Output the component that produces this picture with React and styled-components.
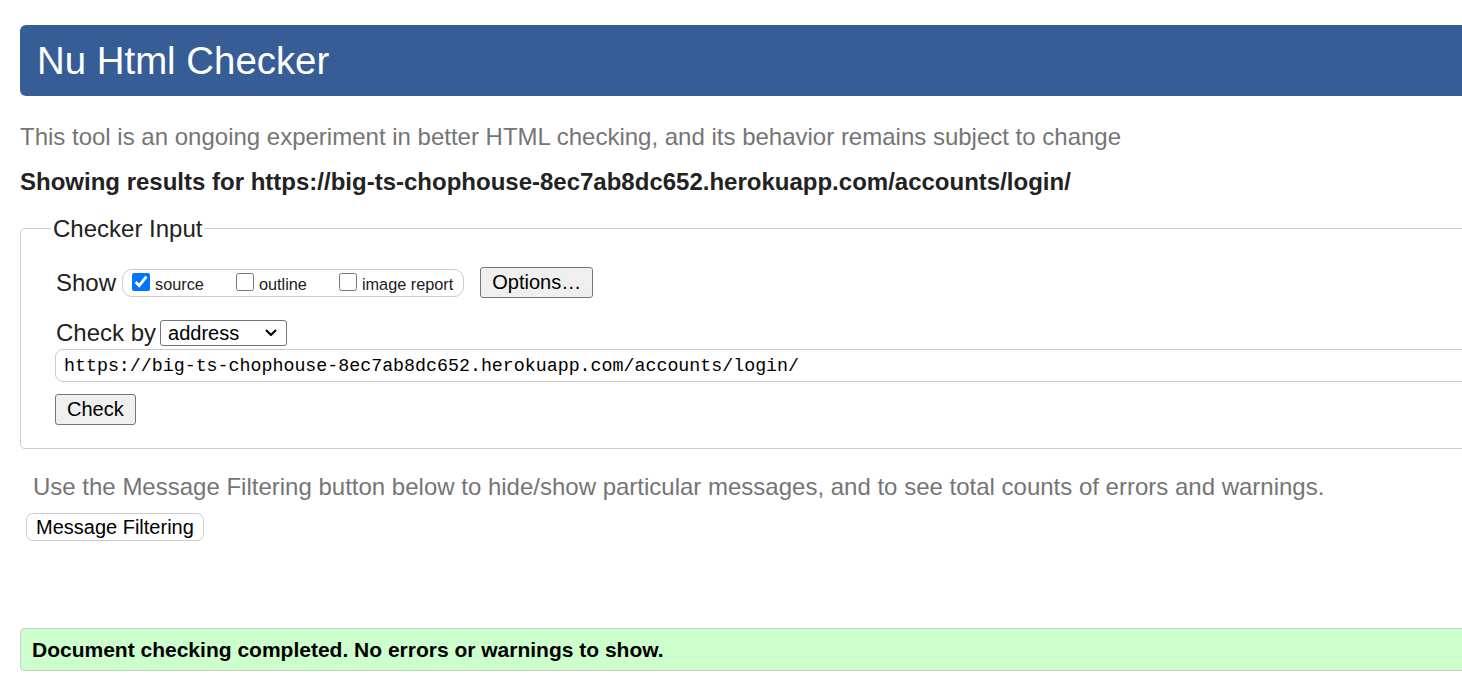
import React from "react";
import styled, { createGlobalStyle } from "styled-components";

const Global = createGlobalStyle`
  html, body { margin: 0; padding: 0; overflow: hidden; background: #fff; }
  body { font-family: "Liberation Sans", Arial, sans-serif; color: #222; }
`;

const Page = styled.div`
  width: 1500px;
  padding: 25px 0 0 20px;
  box-sizing: border-box;
`;

const Header = styled.h1`
  margin: 0;
  height: 71px;
  line-height: 71px;
  background: #365d95;
  color: #fff;
  font-weight: normal;
  font-size: 38.4px;
  padding-left: 17px;
  border-radius: 6px;
`;

const Note = styled.p`
  margin: ${(p) => p.$mt || 0}px 0 0 ${(p) => p.$ml || 0}px;
  font-size: 24px;
  line-height: 28px;
  color: #757575;
`;

const Results = styled.p`
  margin: 17px 0 0;
  font-size: 24px;
  font-weight: bold;
  line-height: 28px;
  color: #222;
`;

const Fieldset = styled.fieldset`
  margin: 19px 0 0;
  padding: 0 0 23px 35px;
  border: 1px solid #ccc;
  border-radius: 5px;
  display: flex;
  flex-direction: column;
  align-items: flex-start;
`;

const Legend = styled.legend`
  font-size: 24px;
  line-height: 27px;
  padding: 0 2px;
  margin-left: -5px;
  color: #222;
`;

const Row = styled.div`
  display: flex;
  align-items: center;
  margin-top: ${(p) => p.$mt || 0}px;
`;

const Label = styled.span`
  font-size: 24px;
  color: #222;
  margin-right: ${(p) => p.$mr || 0}px;
`;

const Choices = styled.div`
  display: flex;
  align-items: center;
  height: 26px;
  padding: 0 10px 0 9px;
  border: 1px solid #ccc;
  border-radius: 10px;
`;

const Choice = styled.label`
  display: flex;
  align-items: center;
  font-size: 16.3px;
  color: #222;
  margin-right: ${(p) => p.$mr || 0}px;
  padding-top: 4px;
`;

const Box = styled.input`
  width: 18px;
  height: 18px;
  margin: 0 5px 6px 0;
  accent-color: #0075ff;
`;

const Button = styled.button`
  font-family: "Liberation Sans", Arial, sans-serif;
  font-size: 20px;
  color: #000;
  height: ${(p) => p.$h || 31}px;
  padding: 0 ${(p) => p.$px || 11}px;
  background: ${(p) => (p.$light ? "#fff" : "#efefef")};
  border: 1px solid ${(p) => (p.$light ? "#ccc" : "#767676")};
  border-radius: ${(p) => (p.$light ? 7 : 3)}px;
  margin-left: ${(p) => p.$ml || 0}px;
  margin-top: ${(p) => p.$mt || 0}px;
  cursor: pointer;
`;

const SelectWrap = styled.span`
  position: relative;
  display: inline-flex;
`;

const Select = styled.select`
  appearance: none;
  -webkit-appearance: none;
  font-family: "Liberation Sans", Arial, sans-serif;
  font-size: 20px;
  width: 127px;
  height: 26px;
  color: #000;
  border: 1px solid #767676;
  border-radius: 3px;
  background: #fff;
  padding: 0 0 0 7px;
  margin: 0;
`;

const Chevron = styled.svg`
  position: absolute;
  right: 10px;
  top: 8px;
  width: 12px;
  height: 10px;
  pointer-events: none;
`;

const UrlInput = styled.input`
  width: 1500px;
  height: 33px;
  box-sizing: border-box;
  margin-top: 2px;
  padding: 0 8px;
  font-family: "Liberation Mono", "DejaVu Sans Mono", monospace;
  font-size: 18.3px;
  color: #000;
  border: 1px solid #ccc;
  border-radius: 8px;
  margin-left: -1px;
`;

const Success = styled.div`
  margin-top: 87px;
  height: 41px;
  line-height: 41px;
  padding-left: 11px;
  background: #ccffcc;
  border: 1px solid #ccc;
  border-radius: 4px;
  font-size: 21px;
  font-weight: bold;
  color: #000;
`;

export default function App() {
  return (
    <>
      <Global />
      <Page>
        <Header>Nu Html Checker</Header>
        <Note $mt={27}>
          This tool is an ongoing experiment in better HTML checking, and its behavior remains subject to change
        </Note>
        <Results>Showing results for https://big-ts-chophouse-8ec7ab8dc652.herokuapp.com/accounts/login/</Results>
        <Fieldset>
          <Legend>Checker Input</Legend>
          <Row $mt={25}>
            <Label $mr={6}>Show</Label>
            <Choices>
              <Choice $mr={32}>
                <Box type="checkbox" defaultChecked />
                source
              </Choice>
              <Choice $mr={32}>
                <Box type="checkbox" />
                outline
              </Choice>
              <Choice>
                <Box type="checkbox" />
                image report
              </Choice>
            </Choices>
            <Button $ml={16}>Options…</Button>
          </Row>
          <Row $mt={21}>
            <Label $mr={4}>Check by</Label>
            <SelectWrap>
              <Select defaultValue="address">
                <option value="address">address</option>
                <option value="file">file upload</option>
                <option value="text">text input</option>
              </Select>
              <Chevron viewBox="0 0 12 10">
                <path d="M1.5 2.5 L6 7 L10.5 2.5" fill="none" stroke="#000" strokeWidth="2" strokeLinecap="round" strokeLinejoin="round" />
              </Chevron>
            </SelectWrap>
          </Row>
          <UrlInput defaultValue="https://big-ts-chophouse-8ec7ab8dc652.herokuapp.com/accounts/login/" />
          <Button $mt={12} $ml={-1}>Check</Button>
        </Fieldset>
        <Note $mt={24} $ml={13}>
          Use the Message Filtering button below to hide/show particular messages, and to see total counts of errors and warnings.
        </Note>
        <Button $light $h={28} $px={9} $ml={6} $mt={12}>Message Filtering</Button>
        <Success>Document checking completed. No errors or warnings to show.</Success>
      </Page>
    </>
  );
}
